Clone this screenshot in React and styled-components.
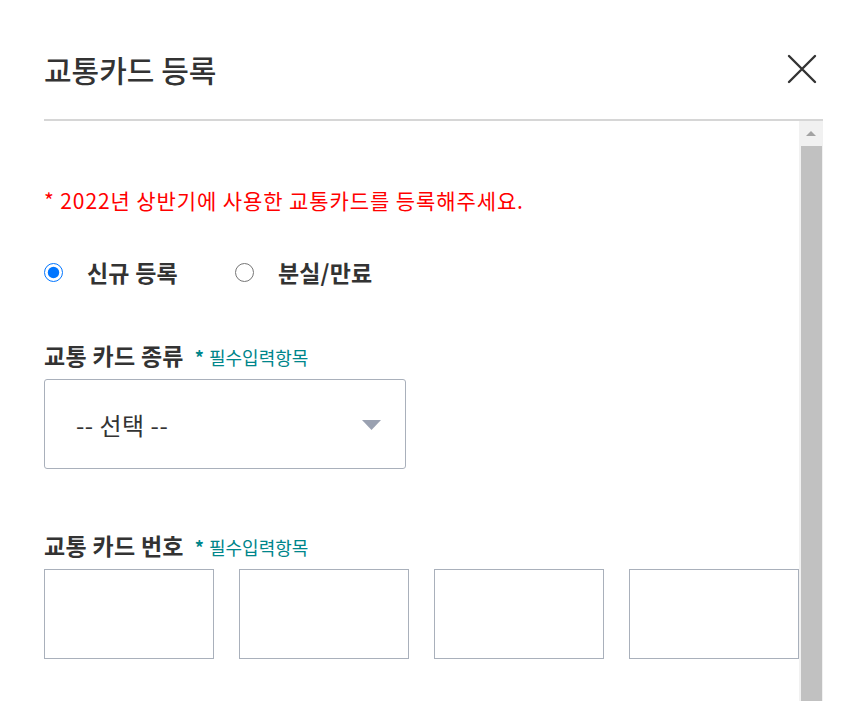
import React, { useState } from 'react';
import styled, { createGlobalStyle } from 'styled-components';

const GlobalStyle = createGlobalStyle`
  html, body {
    margin: 0;
    background: #fff;
    font-family: "Noto Sans CJK KR", "Noto Sans", sans-serif;
    color: #333;
  }
`;

const KINDS = ['-- 선택 --', '티머니', '캐시비', '레일플러스'];

const App = () => {
  const [mode, setMode] = useState('new');
  const [kind, setKind] = useState(KINDS[0]);

  return (
    <>
      <GlobalStyle />
      <Modal>
        <Header>
          <Title>교통카드 등록</Title>
          <CloseButton aria-label="닫기">
            <svg width="30" height="30" viewBox="0 0 30 30">
              <path d="M2 2 L28 28 M28 2 L2 28" stroke="#333" strokeWidth="2.4" strokeLinecap="round" fill="none" />
            </svg>
          </CloseButton>
        </Header>

        <Body>
          <Content>
            <Notice>* 2022년 상반기에 사용한 교통카드를 등록해주세요.</Notice>

            <RadioRow>
              <RadioLabel>
                <Radio type="radio" name="mode" checked={mode === 'new'} onChange={() => setMode('new')} />
                <span>신규 등록</span>
              </RadioLabel>
              <RadioLabel>
                <Radio type="radio" name="mode" checked={mode === 'lost'} onChange={() => setMode('lost')} />
                <span>분실/만료</span>
              </RadioLabel>
            </RadioRow>

            <Field $top={53}>
              <FieldLabel>
                교통 카드 종류
                <Required><Star>*</Star>필수입력항목</Required>
              </FieldLabel>
              <SelectBox>
                <Select value={kind} onChange={e => setKind(e.target.value)}>
                  {KINDS.map(k => <option key={k}>{k}</option>)}
                </Select>
                <Caret viewBox="0 0 19 10">
                  <path d="M0 0 H19 L9.5 10 Z" fill="#9aa1b1" />
                </Caret>
              </SelectBox>
            </Field>

            <Field $top={61}>
              <FieldLabel>
                교통 카드 번호
                <Required><Star>*</Star>필수입력항목</Required>
              </FieldLabel>
              <NumberRow>
                {[0, 1, 2, 3].map(i => <NumberInput key={i} maxLength={4} inputMode="numeric" />)}
              </NumberRow>
            </Field>
          </Content>

          <Scrollbar>
            <ScrollArrow />
            <ScrollThumb />
          </Scrollbar>
        </Body>
      </Modal>
    </>
  );
};

export default App;

const Modal = styled.div`
  height: 701px;
  box-sizing: border-box;
  padding: 0 38px 0 44px;
  display: flex;
  flex-direction: column;
  overflow: hidden;
`;

const Header = styled.div`
  height: 121px;
  box-sizing: border-box;
  padding-top: 18px;
  display: flex;
  align-items: center;
  justify-content: space-between;
  border-bottom: 2px solid #d6d6d6;
`;

const Title = styled.h1`
  margin: 0;
  font-size: 30px;
  font-weight: 500;
  line-height: 40px;
  color: #333;
`;

const CloseButton = styled.button`
  border: none;
  background: none;
  padding: 0;
  margin-right: 6px;
  width: 30px;
  height: 30px;
  cursor: pointer;
  display: flex;
`;

const Body = styled.div`
  flex: 1;
  display: flex;
  min-height: 0;
`;

const Content = styled.div`
  flex: 1;
  padding-top: 64px;
`;

const Notice = styled.p`
  margin: 0;
  font-size: 21px;
  line-height: 30px;
  color: #ff0000;
  letter-spacing: 0.9px;
`;

const RadioRow = styled.div`
  margin-top: 42px;
  display: flex;
  gap: 57px;
  height: 30px;
  align-items: center;
`;

const RadioLabel = styled.label`
  display: flex;
  align-items: center;
  gap: 24px;
  font-size: 23px;
  font-weight: 700;
  letter-spacing: 0.2px;
  color: #333;
  cursor: pointer;
`;

const Radio = styled.input`
  width: 19px;
  height: 19px;
  margin: 0;
`;

const Field = styled.div`
  margin-top: ${p => p.$top}px;
`;

const FieldLabel = styled.div`
  display: flex;
  align-items: baseline;
  height: 30px;
  font-size: 23px;
  font-weight: 700;
  letter-spacing: 0.3px;
  line-height: 30px;
  margin-bottom: 9px;
  color: #333;
`;

const Required = styled.span`
  margin-left: 11px;
  font-size: 18px;
  font-weight: 400;
  color: #00868b;
  letter-spacing: 0;
`;

const Star = styled.span`
  font-weight: 700;
  margin-right: 5px;
`;

const SelectBox = styled.div`
  position: relative;
  width: 362px;
  height: 90px;
`;

const Select = styled.select`
  appearance: none;
  width: 100%;
  height: 100%;
  box-sizing: border-box;
  border: 1px solid #a9b0bb;
  border-radius: 3px;
  background: #fff;
  padding: 0 0 0 31px;
  font-family: inherit;
  font-size: 24px;
  letter-spacing: 0.5px;
  color: #333;
  outline: none;
`;

const Caret = styled.svg`
  position: absolute;
  right: 25px;
  top: 41px;
  width: 19px;
  height: 10px;
  pointer-events: none;
`;

const NumberRow = styled.div`
  display: grid;
  grid-template-columns: repeat(4, 170px);
  gap: 25px;
`;

const NumberInput = styled.input`
  height: 90px;
  box-sizing: border-box;
  border: 1px solid #a9b0bb;
  border-radius: 0;
  padding: 0 12px;
  font-size: 22px;
  outline: none;
`;

const Scrollbar = styled.div`
  width: 24px;
  background: #f1f1f1;
  display: flex;
  flex-direction: column;
  align-items: center;
`;

const ScrollArrow = styled.div`
  height: 25px;
  width: 100%;
  display: flex;
  align-items: center;
  justify-content: center;
  &::before {
    content: '';
    border-left: 5px solid transparent;
    border-right: 5px solid transparent;
    border-bottom: 5px solid #a3a3a3;
  }
`;

const ScrollThumb = styled.div`
  flex: 1;
  width: 21px;
  margin-left: 1px;
  background: #c1c1c1;
`;
